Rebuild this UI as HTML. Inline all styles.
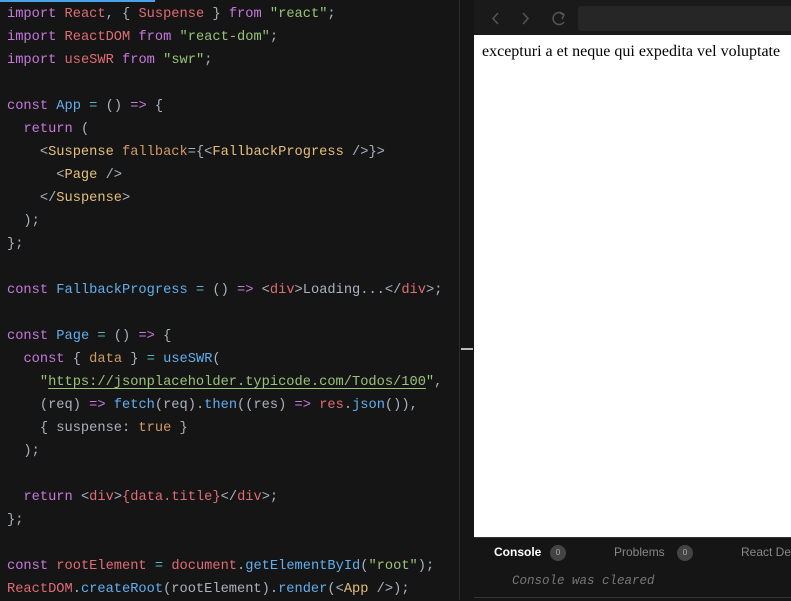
<!DOCTYPE html>
<html><head><style>
body{margin:0;width:791px;height:600px;background:#151515;overflow:hidden;position:relative;font-family:"Liberation Mono",monospace}
.ed{position:absolute;left:0;top:0;width:459px;height:600px;background:#151515}
.l{position:absolute;left:7px;height:23px;line-height:23px;font-size:13.7px;white-space:pre;color:#abb2bf}
.k{color:#c678dd}.r{color:#e06c75}.g{color:#98c379}.b{color:#61afef}.o{color:#d19a66}.y{color:#e5c07b}.p{color:#abb2bf}.c{color:#56b6c2}
.u{text-decoration:underline;text-decoration-color:#98c379;text-underline-offset:3px}
</style></head><body>
<div class="ed">
<div style="position:absolute;left:0;top:0;width:155px;height:2px;background:#4aa3e8"></div>
<div class="l" style="top:3px"><span class="k">import</span> <span class="r">React</span>, { <span class="r">Suspense</span> } <span class="k">from</span> <span class="g">"react"</span>;</div>
<div class="l" style="top:26px"><span class="k">import</span> <span class="r">ReactDOM</span> <span class="k">from</span> <span class="g">"react-dom"</span>;</div>
<div class="l" style="top:49px"><span class="k">import</span> <span class="r">useSWR</span> <span class="k">from</span> <span class="g">"swr"</span>;</div>
<div class="l" style="top:95px"><span class="k">const</span> <span class="b">App</span> <span class="c">=</span> () <span class="k">=&gt;</span> {</div>
<div class="l" style="top:118px">  <span class="k">return</span> (</div>
<div class="l" style="top:141px">    &lt;<span class="y">Suspense</span> <span class="o">fallback</span>={&lt;<span class="y">FallbackProgress</span> /&gt;}&gt;</div>
<div class="l" style="top:164px">      &lt;<span class="y">Page</span> /&gt;</div>
<div class="l" style="top:187px">    &lt;/<span class="y">Suspense</span>&gt;</div>
<div class="l" style="top:210px">  );</div>
<div class="l" style="top:233px">};</div>
<div class="l" style="top:279px"><span class="k">const</span> <span class="b">FallbackProgress</span> <span class="c">=</span> () <span class="k">=&gt;</span> &lt;<span class="r">div</span>&gt;Loading...&lt;/<span class="r">div</span>&gt;;</div>
<div class="l" style="top:325px"><span class="k">const</span> <span class="b">Page</span> <span class="c">=</span> () <span class="k">=&gt;</span> {</div>
<div class="l" style="top:348px">  <span class="k">const</span> { <span class="o">data</span> } <span class="c">=</span> <span class="b">useSWR</span>(</div>
<div class="l" style="top:371px">    <span class="g">"<span class="u">https://jsonplaceholder.typicode.com/Todos/100</span>"</span>,</div>
<div class="l" style="top:394px">    (req) <span class="k">=&gt;</span> <span class="b">fetch</span>(req).<span class="b">then</span>((res) <span class="k">=&gt;</span> <span class="r">res</span>.<span class="b">json</span>()),</div>
<div class="l" style="top:417px">    { suspense: <span class="o">true</span> }</div>
<div class="l" style="top:440px">  );</div>
<div class="l" style="top:486px">  <span class="k">return</span> &lt;<span class="r">div</span>&gt;<span class="r">{data.title}</span>&lt;/<span class="r">div</span>&gt;;</div>
<div class="l" style="top:509px">};</div>
<div class="l" style="top:555px"><span class="k">const</span> <span class="r">rootElement</span> <span class="c">=</span> <span class="r">document</span>.<span class="b">getElementById</span>(<span class="g">"root"</span>);</div>
<div class="l" style="top:578px"><span class="r">ReactDOM</span>.<span class="b">createRoot</span>(rootElement).<span class="b">render</span>(&lt;<span class="y">App</span> /&gt;);</div>
</div>
<div style="position:absolute;left:459px;top:0;width:1px;height:600px;background:#2a2a2a"></div>
<div style="position:absolute;left:460px;top:0;width:14px;height:600px;background:#151515"></div>
<div style="position:absolute;left:461px;top:348px;width:12px;height:2px;background:#bbb"></div>
<div style="position:absolute;left:474px;top:0;width:317px;height:35px;background:#1a1a1a"></div>
<svg style="position:absolute;left:474px;top:0" width="110" height="35" fill="none" stroke="#555" stroke-width="1.5">
<path d="M24 13 L19 18.5 L24 24"/><path d="M49 13 L54 18.5 L49 24"/>
<path d="M90 15 A6 6 0 1 0 90 22"/><path d="M86 13 L90 15 L88 19" />
</svg>
<div style="position:absolute;left:578px;top:6px;width:213px;height:25px;background:#262626;border-radius:3px 0 0 3px"></div>
<div style="position:absolute;left:474px;top:35px;width:317px;height:502px;background:#fff"></div>
<div style="position:absolute;left:482px;top:43px;font-family:'Liberation Serif',serif;font-size:16px;color:#000;white-space:nowrap">excepturi a et neque qui expedita vel voluptate</div>
<div style="position:absolute;left:474px;top:537px;width:317px;height:1px;background:#333"></div>
<div style="position:absolute;left:474px;top:597px;width:317px;height:1px;background:#333"></div>
<div style="position:absolute;left:494px;top:545px;font-family:'Liberation Sans',sans-serif;font-size:12px;font-weight:bold;color:#fff">Console</div>
<div style="position:absolute;left:550px;top:545px;width:16px;height:16px;border-radius:8px;background:#444;color:#aaa;font-size:8px;text-align:center;line-height:16px;font-family:'Liberation Sans',sans-serif">0</div>
<div style="position:absolute;left:614px;top:545px;font-family:'Liberation Sans',sans-serif;font-size:12px;color:#888">Problems</div>
<div style="position:absolute;left:677px;top:545px;width:16px;height:16px;border-radius:8px;background:#444;color:#aaa;font-size:8px;text-align:center;line-height:16px;font-family:'Liberation Sans',sans-serif">0</div>
<div style="position:absolute;left:741px;top:545px;font-family:'Liberation Sans',sans-serif;font-size:12px;color:#888;white-space:nowrap">React DevTools</div>
<div style="position:absolute;left:512px;top:574px;font-size:12.5px;font-style:italic;color:#777;white-space:nowrap">Console was cleared</div>
</body></html>
